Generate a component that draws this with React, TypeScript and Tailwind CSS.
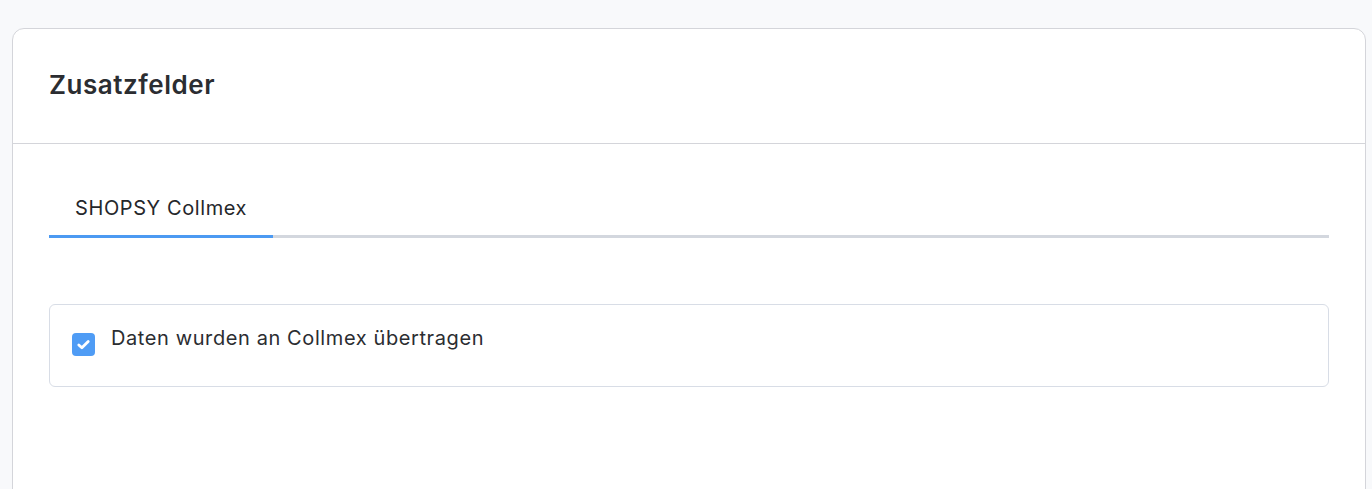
import React from "react";

export default function App() {
  return (
    <div
      className="min-h-[489px] bg-[#f8f9fb] pt-[28px] pl-[12px] pr-[6px]"
      style={{ fontFamily: "Inter, 'Noto Sans', sans-serif" }}
    >
      <div className="bg-white border border-[#d4d5da] rounded-[12px] min-h-[480px]">
        <div className="h-[115px] border-b border-[#d4d5da] flex items-center pl-[36px]">
          <h1 className="text-[26px] tracking-[0.55px] font-semibold text-[#2b2d31] leading-none -mt-[2px]">
            Zusatzfelder
          </h1>
        </div>
        <div className="px-[36px] pt-[50px]">
          <div className="flex border-b-[3px] border-[#d3d7de]">
            <div className="w-[224px] -mb-[3px] border-b-[3px] border-[#4c9af2] pl-[26px] pb-[13px] text-[20px] tracking-[0.6px] text-[#25272b] leading-[28px]">
              SHOPSY Collmex
            </div>
          </div>
          <div className="mt-[66px] border border-[#d8dde6] rounded-[6px] h-[83px] flex items-start pl-[22px] pt-[27px]">
            <div className="w-[23px] h-[23px] rounded-[4px] bg-[#4f9cf5] flex items-center justify-center mt-[1px] shrink-0">
              <svg width="23" height="23" viewBox="0 0 23 23" fill="none">
                <path d="M6.8 11.9 L9.9 14.8 L16.2 8.4" stroke="white" strokeWidth="2.8" strokeLinecap="round" strokeLinejoin="round" />
              </svg>
            </div>
            <span className="ml-[16px] text-[20px] tracking-[0.6px] text-[#2b2d31] leading-[28px] -mt-[8px]">
              Daten wurden an Collmex übertragen
            </span>
          </div>
        </div>
      </div>
    </div>
  );
}
